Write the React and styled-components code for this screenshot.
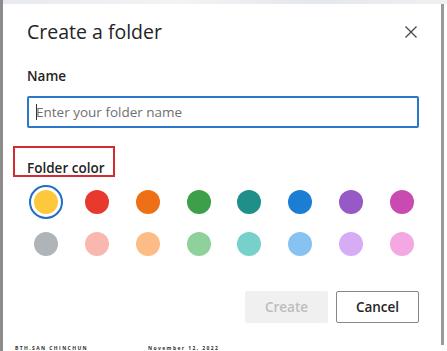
import styled, { createGlobalStyle } from "styled-components";

const GlobalStyle = createGlobalStyle`
  html, body {
    margin: 0;
    padding: 0;
    background: #ffffff;
  }
  body {
    font-family: "Open Sans", "Noto Sans", sans-serif;
    color: #242424;
  }
`;

const Screen = styled.div`
  width: 447px;
  height: 351px;
  display: flex;
  flex-direction: column;
  border-left: 3px solid #8c8c8c;
  box-sizing: border-box;
  overflow: hidden;
  background: #ffffff;
`;

const TopStrip = styled.div`
  height: 4px;
  flex: none;
  background: linear-gradient(90deg, #e7eaee, #f2f3f5 40%, #e4e7eb 70%, #eef0f2);
`;

const Dialog = styled.div`
  flex: none;
  width: 441px;
  height: 341px;
  box-sizing: border-box;
  padding: 14px 22px 22px 24px;
  background: #ffffff;
  border-right: 3px solid #9a9a9a;
  display: flex;
  flex-direction: column;
`;

const Header = styled.div`
  display: flex;
  align-items: center;
  justify-content: space-between;
  height: 28px;
`;

const Title = styled.h1`
  margin: 0;
  font-size: 19.5px;
  line-height: 28px;
  font-weight: 400;
  color: #242424;
`;

const CloseButton = styled.button`
  width: 16px;
  height: 16px;
  padding: 0;
  border: none;
  background: none;
  display: flex;
  align-items: center;
  justify-content: center;
  cursor: pointer;
`;

const Label = styled.div`
  position: relative;
  font-size: 13.5px;
  line-height: 20px;
  font-weight: 600;
  margin-top: ${(p) => p.$top}px;
`;

const Highlight = styled.span`
  position: absolute;
  left: -14px;
  top: -12px;
  width: 102px;
  height: 31px;
  box-sizing: border-box;
  border: 2px solid #d42a33;
`;

const InputWrap = styled.div`
  position: relative;
  margin-top: 10px;
`;

const NameInput = styled.input`
  display: block;
  width: 100%;
  height: 32px;
  box-sizing: border-box;
  border: 2px solid #2b78c9;
  border-radius: 2px;
  padding: 0 7px;
  font-family: inherit;
  font-size: 13.5px;
  color: #242424;
  outline: none;
  &::placeholder {
    color: #707070;
  }
`;

const Caret = styled.span`
  position: absolute;
  left: 9px;
  top: 8px;
  width: 1px;
  height: 16px;
  background: #333333;
`;

const Swatches = styled.div`
  display: grid;
  grid-template-columns: repeat(8, 34px);
  grid-auto-rows: 34px;
  row-gap: 8px;
  justify-content: space-between;
  padding-left: 2px;
  margin-top: 7px;
`;

const Swatch = styled.button`
  width: 34px;
  height: 34px;
  padding: 0;
  border-radius: 50%;
  background: none;
  border: 2px solid ${(p) => (p.$selected ? "#1f6fc5" : "transparent")};
  box-sizing: border-box;
  display: flex;
  align-items: center;
  justify-content: center;
  cursor: pointer;
  &::after {
    content: "";
    width: 24px;
    height: 24px;
    border-radius: 50%;
    background: ${(p) => p.$color};
  }
`;

const Footer = styled.div`
  margin-top: auto;
  display: flex;
  justify-content: flex-end;
  gap: 8px;
`;

const Button = styled.button`
  width: 83px;
  height: 32px;
  box-sizing: border-box;
  border-radius: 2px;
  font-family: inherit;
  font-size: 13.5px;
  font-weight: 600;
  border: 1px solid ${(p) => (p.$disabled ? "#f0f0f0" : "#8a8886")};
  background: ${(p) => (p.$disabled ? "#f0f0f0" : "#ffffff")};
  color: ${(p) => (p.$disabled ? "#bdbdbd" : "#242424")};
  cursor: ${(p) => (p.$disabled ? "default" : "pointer")};
`;

const BottomStrip = styled.div`
  flex: none;
  height: 6px;
  display: flex;
  align-items: center;
  gap: 60px;
  padding-left: 12px;
  font-size: 5px;
  line-height: 6px;
  font-weight: 700;
  letter-spacing: 1.4px;
  color: #2e2e2e;
  white-space: nowrap;
`;

const colors = [
  "#fdc83b",
  "#e8392e",
  "#ed7016",
  "#3e9f4a",
  "#1f8f89",
  "#1b7ed4",
  "#9659c6",
  "#c94bb1",
  "#aeb4b8",
  "#f8b8b0",
  "#fdbc85",
  "#8fd19a",
  "#77d0ca",
  "#86c3f3",
  "#d6acf5",
  "#f4a8e2",
];

function App() {
  return (
    <>
      <GlobalStyle />
      <Screen>
        <TopStrip />
        <Dialog>
          <Header>
            <Title>Create a folder</Title>
            <CloseButton aria-label="Close">
              <svg width="16" height="16" viewBox="0 0 16 16">
                <path
                  d="M2.5 2.5 L13.5 13.5 M13.5 2.5 L2.5 13.5"
                  stroke="#424242"
                  strokeWidth="1.2"
                  fill="none"
                />
              </svg>
            </CloseButton>
          </Header>
          <Label $top={20}>Name</Label>
          <InputWrap>
            <NameInput placeholder="Enter your folder name" />
            <Caret />
          </InputWrap>
          <Label $top={30}>
            <Highlight />
            Folder color
          </Label>
          <Swatches>
            {colors.map((c, i) => (
              <Swatch key={c} $color={c} $selected={i === 0} aria-label={c} />
            ))}
          </Swatches>
          <Footer>
            <Button $disabled>Create</Button>
            <Button>Cancel</Button>
          </Footer>
        </Dialog>
        <BottomStrip>
          <span>BTH.SAN CHINCHUN</span>
          <span>November 12, 2022</span>
        </BottomStrip>
      </Screen>
    </>
  );
}

export default App;
